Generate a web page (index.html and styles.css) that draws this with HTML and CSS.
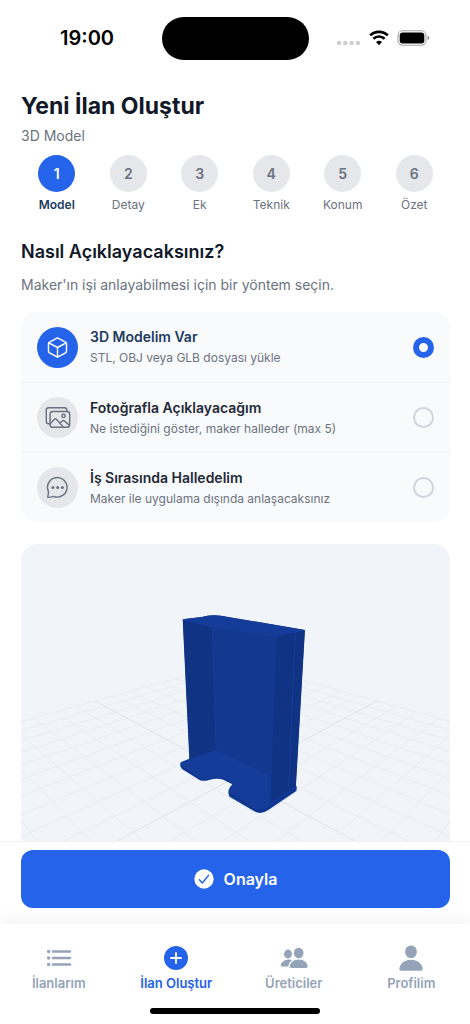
FILE: index.html
```html
<!DOCTYPE html>
<html lang="tr">

	<head>
		<meta charset="UTF-8">
		<meta name="viewport" content="width=device-width, initial-scale=1">
		<title>Yeni İlan Oluştur</title>
		<link rel="stylesheet" href="styles.css">
		<script src="scene.js" type="text/javascript" charset="utf-8"></script>
	</head>

	<body>
		<div class="statusbar">
			<span class="time">19:00</span>
			<span class="island"></span>
			<div class="status-icons">
				<svg class="signal" width="24" height="6" viewBox="0 0 24 6" fill="#cfcfcf">
					<rect x="0" y="1" width="4" height="4" rx="1.300" />
					<rect x="6.300" y="1" width="4" height="4" rx="1.300" />
					<rect x="12.600" y="1" width="4" height="4" rx="1.300" />
					<rect x="18.900" y="1" width="4" height="4" rx="1.300" />
				</svg>
				<svg width="20" height="16" viewBox="0 0 20 16" fill="none" stroke="#000" stroke-width="2.7">
					<path d="M1.2 5.4a12.6 12.6 0 0 1 17.6 0" />
					<path d="M4.4 8.8a8 8 0 0 1 11.2 0" />
					<path d="M10 15.2 7 12.1a4.4 4.4 0 0 1 6 0z" fill="#000" stroke="none" />
				</svg>
				<svg width="33" height="16" viewBox="0 0 33 16">
					<rect x="1" y=".8" width="28" height="14.4" rx="4.6" fill="none" stroke="#a5a5a5" stroke-width="1.1" />
					<rect x="2.7" y="2.6" width="24.6" height="10.8" rx="3" />
					<path d="M30.5 5.8v4.4q1.8-.6 1.8-2.2t-1.8-2.2z" fill="#8d8d8d" />
				</svg>
			</div>
		</div>

		<main>
			<h1>Yeni İlan Oluştur</h1>
			<p class="subtitle">3D Model</p>

			<ol class="steps">
				<li class="active"><span class="num">1</span><span class="name">Model</span></li>
				<li><span class="num">2</span><span class="name">Detay</span></li>
				<li><span class="num">3</span><span class="name">Ek</span></li>
				<li><span class="num">4</span><span class="name">Teknik</span></li>
				<li><span class="num">5</span><span class="name">Konum</span></li>
				<li><span class="num">6</span><span class="name">Özet</span></li>
			</ol>

			<h2>Nasıl Açıklayacaksınız?</h2>
			<p class="hint">Maker'ın işi anlayabilmesi için bir yöntem seçin.</p>

			<div class="options">
				<label class="option" for="opt-model">
					<span class="icon">
						<svg viewBox="0 0 24 24">
							<path d="M12 2 20.400 6.500q1 .5 1 1.600v7.800q0 1.100-1 1.600L12 22 3.600 17.500q-1-.5-1-1.600V8.100q0-1.100 1-1.600z" />
							<path d="M3 7.100 12 12l9-4.900M12 12v10" />
						</svg>
					</span>
					<span class="text">
						<span class="title">3D Modelim Var</span>
						<span class="desc">STL, OBJ veya GLB dosyası yükle</span>
					</span>
					<input type="radio" name="method" id="opt-model" checked>
				</label>
				<label class="option" for="opt-photo">
					<span class="icon">
						<svg class="wide" viewBox="0 0 28 24">
							<path d="M6.200 18.500H4.700a2.400 2.400 0 0 1-2.400-2.400V4.300a2.400 2.400 0 0 1 2.400-2.400h16.600a2.400 2.400 0 0 1 2.400 2.400v1.500" />
							<rect x="6.300" y="5.800" width="20.400" height="16.400" rx="2.600" />
							<circle cx="20.300" cy="10.400" r="1.700" />
							<path d="m6.500 18.400 4-4.400q1.200-1.200 2.500 0l7 7.800M16.500 18l2.400-2.400q1.200-1 2.400 0l5.200 4.600" />
						</svg>
					</span>
					<span class="text">
						<span class="title">Fotoğrafla Açıklayacağım</span>
						<span class="desc">Ne istediğini göster, maker halleder (max 5)</span>
					</span>
					<input type="radio" name="method" id="opt-photo">
				</label>
				<label class="option" for="opt-chat">
					<span class="icon">
						<svg viewBox="0 0 24 24">
							<path d="M2.600 16.300A10.200 10.200 0 1 1 7.800 21.200Q5.500 22.200 2.600 22.300 1.700 22.300 1.900 21.300 2.700 18.500 2.600 16.300z" />
							<g class="dots">
								<circle cx="7.300" cy="12" r="1.600" />
								<circle cx="12.200" cy="12" r="1.600" />
								<circle cx="17.100" cy="12" r="1.600" />
							</g>
						</svg>
					</span>
					<span class="text">
						<span class="title">İş Sırasında Halledelim</span>
						<span class="desc">Maker ile uygulama dışında anlaşacaksınız</span>
					</span>
					<input type="radio" name="method" id="opt-chat">
				</label>
			</div>

			<div class="viewer">
				<svg viewBox="0 0 429 360">
					<g id="grid"></g>
					<!-- model -->
					<g transform="translate(139 56) scale(.3333)">
						<path fill="#123a97" d="M68 58 125 51Q150 43 182 47L435 90 408 555Q412 562 409 573L325 630Q302 646 283 634L211 592Q203 586 206 570 210 560 217 553L190 539Q172 533 150 539 132 545 120 541L66 507Q58 498 62 487L88 476z" />
						<path fill="#103383" d="M69 61 157 83 168 450 89 477z" />
						<path fill="#13388f" d="M157 83 350 110 330 526 168 450z" />
						<path fill="#143c98" d="M68 58 125 51Q150 43 182 47L435 90 350 110 157 83z" />
						<path fill="#103384" d="M350 110 434 92 407 557 331 610z" />
						<path fill="#143c98" d="M168 450 330 526V612L300 631 213 579Q211 567 221 552L190 535Q170 528 150 534 132 539 121 534L66 500 62 488 90 477z" />
						<path fill="none" stroke="#153d98" stroke-width="3" d="M157 84 168 450M406 100 386 560" />
						<path fill="none" stroke="#0e3080" stroke-width="3" d="M63 498 121 538M212 584 285 630Q300 637 315 629L407 567" />
					</g>
				</svg>
			</div>
		</main>

		<div class="actions">
			<button type="button">
				<svg width="20" height="20" viewBox="0 0 20 20">
					<circle cx="10" cy="10" r="9.700" fill="#fff" />
					<path d="m5.400 10.700 2.900 3.300 6.200-7.600" fill="none" stroke="#2563eb" stroke-width="1.500" stroke-linecap="round" stroke-linejoin="round" />
				</svg>
				Onayla
			</button>
		</div>

		<nav class="tabbar">
			<a href="#">
				<svg viewBox="0 0 28 28" stroke="currentColor" stroke-width="2.600" stroke-linecap="round">
					<path d="M8 7.500h17M8 14h17M8 20.500h17" />
					<path d="M3.600 7.500h.1M3.600 14h.1M3.600 20.500h.1" stroke-width="3.400" />
				</svg>
				İlanlarım
			</a>
			<a href="#" class="active">
				<svg viewBox="0 0 28 28">
					<circle cx="14" cy="14" r="12" fill="currentColor" />
					<path d="M14 9v10M9 14h10" stroke="#fff" stroke-width="1.800" stroke-linecap="round" />
				</svg>
				İlan Oluştur
			</a>
			<a href="#">
				<svg viewBox="0 0 28 28" fill="currentColor">
					<ellipse cx="8" cy="10" rx="4" ry="4.400" />
					<path d="M12.200 16.200Q8 14.700 4.200 16.800 1 18.600.7 21.300.6 22.500 1.800 22.500H8.400Q8.600 18.800 12.200 16.200z" />
					<ellipse cx="18.700" cy="9" rx="4.800" ry="5.200" />
					<path d="M18.700 15.500q4 0 6.600 2.300 2 1.900 2.400 4.300.2 1.800-1.400 1.800H11.100q-1.600 0-1.400-1.800.4-2.400 2.400-4.300 2.600-2.300 6.600-2.300z" />
				</svg>
				Üreticiler
			</a>
			<a href="#">
				<svg viewBox="0 0 28 28" fill="currentColor">
					<ellipse cx="14" cy="7.700" rx="5.900" ry="6.300" />
					<path d="M14 15.800q5.800 0 9.200 3.600 2.200 2.400 2.500 5 .1 2.300-1.900 2.300H4.200q-2 0-1.900-2.300.3-2.600 2.500-5 3.400-3.600 9.200-3.600z" />
				</svg>
				Profilim
			</a>
		</nav>
		<div class="home"><span></span></div>
	</body>

</html>
```
FILE: styles.css
```css
* {
	margin: 0;
	padding: 0;
	box-sizing: border-box;
}

body {
	height: 100vh;
	display: flex;
	flex-direction: column;
	overflow: hidden;
	background: #fff;
	color: #111827;
	font-family: Inter, "Liberation Sans", sans-serif;
}

ol {
	list-style: none;
}

.statusbar {
	flex: none;
	height: 76px;
	padding: 0 40px;
	display: grid;
	grid-template-columns: 1fr 147px 1fr;
	align-items: center;
	color: #000;
}

.time {
	padding-left: 20px;
	font-size: 20px;
	font-weight: 600;
}

.island {
	height: 43px;
	border-radius: 22px;
	background: #000;
}

.status-icons {
	display: flex;
	align-items: center;
	justify-content: flex-end;
	gap: 8px;
}

.status-icons .signal {
	margin-top: 10px;
}

main {
	flex: 1;
	min-height: 0;
	overflow: hidden;
	padding: 14px 20px 0 21px;
}

h1 {
	font-size: 23px;
	line-height: 32px;
	font-weight: 700;
}

.subtitle {
	color: #6b7280;
	font-size: 14px;
	line-height: 20px;
	margin-top: 4px;
}

.steps {
	display: grid;
	grid-template-columns: repeat(6, 1fr);
	margin-top: 9px;
}

.steps li {
	display: flex;
	flex-direction: column;
	align-items: center;
	gap: 5px;
	color: #6b7280;
}

.steps .num {
	width: 37px;
	height: 37px;
	border-radius: 50%;
	background: #e5e7eb;
	text-align: center;
	line-height: 37px;
	font-size: 14px;
	font-weight: 600;
}

.steps .name {
	font-size: 12px;
	line-height: 16px;
}

.steps .active .num {
	background: #2563eb;
	color: #fff;
}

.steps .active .name {
	color: #1e3a5f;
	font-weight: 600;
}

h2 {
	margin-top: 27px;
	font-size: 18px;
	line-height: 24px;
	font-weight: 600;
}

.hint {
	margin-top: 11px;
	color: #6b7280;
	font-size: 14px;
	line-height: 20px;
}

.options {
	margin-top: 17px;
	border-radius: 16px;
	background: #f9fafb;
}

.option {
	display: flex;
	align-items: center;
	gap: 12px;
	height: 70px;
	padding: 0 16px;
}

.option + .option {
	border-top: 1px solid #f1f3f5;
}

.option .icon {
	flex: none;
	width: 41px;
	height: 41px;
	border-radius: 50%;
	background: #e5e7eb;
	display: flex;
	align-items: center;
	justify-content: center;
}

.option .icon svg {
	width: 23px;
	height: 23px;
	fill: none;
	stroke: #6b7280;
	stroke-width: 1.5;
	stroke-linecap: round;
	stroke-linejoin: round;
}

.option .icon svg.wide {
	width: 27px;
}

.option .dots {
	fill: #6b7280;
	stroke: none;
}

.option .text {
	flex: 1;
	display: flex;
	flex-direction: column;
	gap: 2px;
}

.option .title {
	color: #1f2937;
	font-size: 14px;
	line-height: 20px;
	font-weight: 600;
}

.option .desc {
	color: #6b7280;
	font-size: 12px;
	line-height: 18px;
}

.option:first-child .icon {
	background: #2563eb;
}

.option:first-child .icon svg {
	stroke: #fff;
}

.option:first-child .title {
	color: #1e3a5f;
}

.option input {
	appearance: none;
	flex: none;
	width: 21px;
	height: 21px;
	border: 2px solid #d1d5db;
	border-radius: 50%;
}

.option input:checked {
	border: 6px solid #2563eb;
	background: #fff;
}

.viewer {
	margin-top: 22px;
	border-radius: 16px;
	background: #f1f5f9;
	overflow: hidden;
}

.viewer svg {
	display: block;
	width: 100%;
}

.actions {
	flex: none;
	padding: 8px 20px 16px 21px;
	border-top: 1px solid #f1f2f4;
}

.actions button {
	width: 100%;
	height: 58px;
	border: none;
	border-radius: 12px;
	background: #2563eb;
	color: #fff;
	font-family: inherit;
	font-size: 16px;
	font-weight: 600;
	display: flex;
	align-items: center;
	justify-content: center;
	gap: 10px;
}

.tabbar {
	flex: none;
	display: grid;
	grid-template-columns: repeat(4, 1fr);
	height: 84px;
	padding-top: 20px;
	background: #fff;
	box-shadow: 0 -4px 16px rgba(0, 0, 0, .05);
}

.tabbar a {
	display: flex;
	flex-direction: column;
	align-items: center;
	gap: 2px;
	color: #94a3b8;
	font-size: 13px;
	line-height: 18px;
	font-weight: 600;
	text-decoration: none;
}

.tabbar a svg {
	width: 28px;
	height: 28px;
}

.tabbar .active {
	color: #2563eb;
}

.home {
	flex: none;
	height: 16px;
	background: #fff;
}

.home span {
	display: block;
	width: 36%;
	height: 6px;
	margin: 0 auto;
	border-radius: 3px;
	background: #000;
}

#grid line {
	stroke: #e9edf1;
	stroke-width: 1;
}

#grid line.axis {
	stroke: #dfe3e7;
}
```
FILE: scene.js
```js
window.onload = function() {
	var grid = document.getElementById('grid');

	// ground point (u, v) to svg point
	function project(u, v) {
		var w = 1 - 0.0475 * (u + v);
		return [215 + 20.8 * (u - v) / w, -3 + 236 / w];
	}

	function addLine(a, b, axis) {
		var line = document.createElementNS('http://www.w3.org/2000/svg', 'line');
		line.setAttribute('x1', a[0]);
		line.setAttribute('y1', a[1]);
		line.setAttribute('x2', b[0]);
		line.setAttribute('y2', b[1]);
		if(axis) {
			line.setAttribute('class', 'axis');
		}
		grid.appendChild(line);
	}

	for(var i = -10; i <= 10; i++) {
		// stop before the lines run behind the camera
		var end = Math.min(10, 16 - i);
		addLine(project(i, -10), project(i, end), i == 0);
		addLine(project(-10, i), project(end, i), i == 0);
	}
}
```
